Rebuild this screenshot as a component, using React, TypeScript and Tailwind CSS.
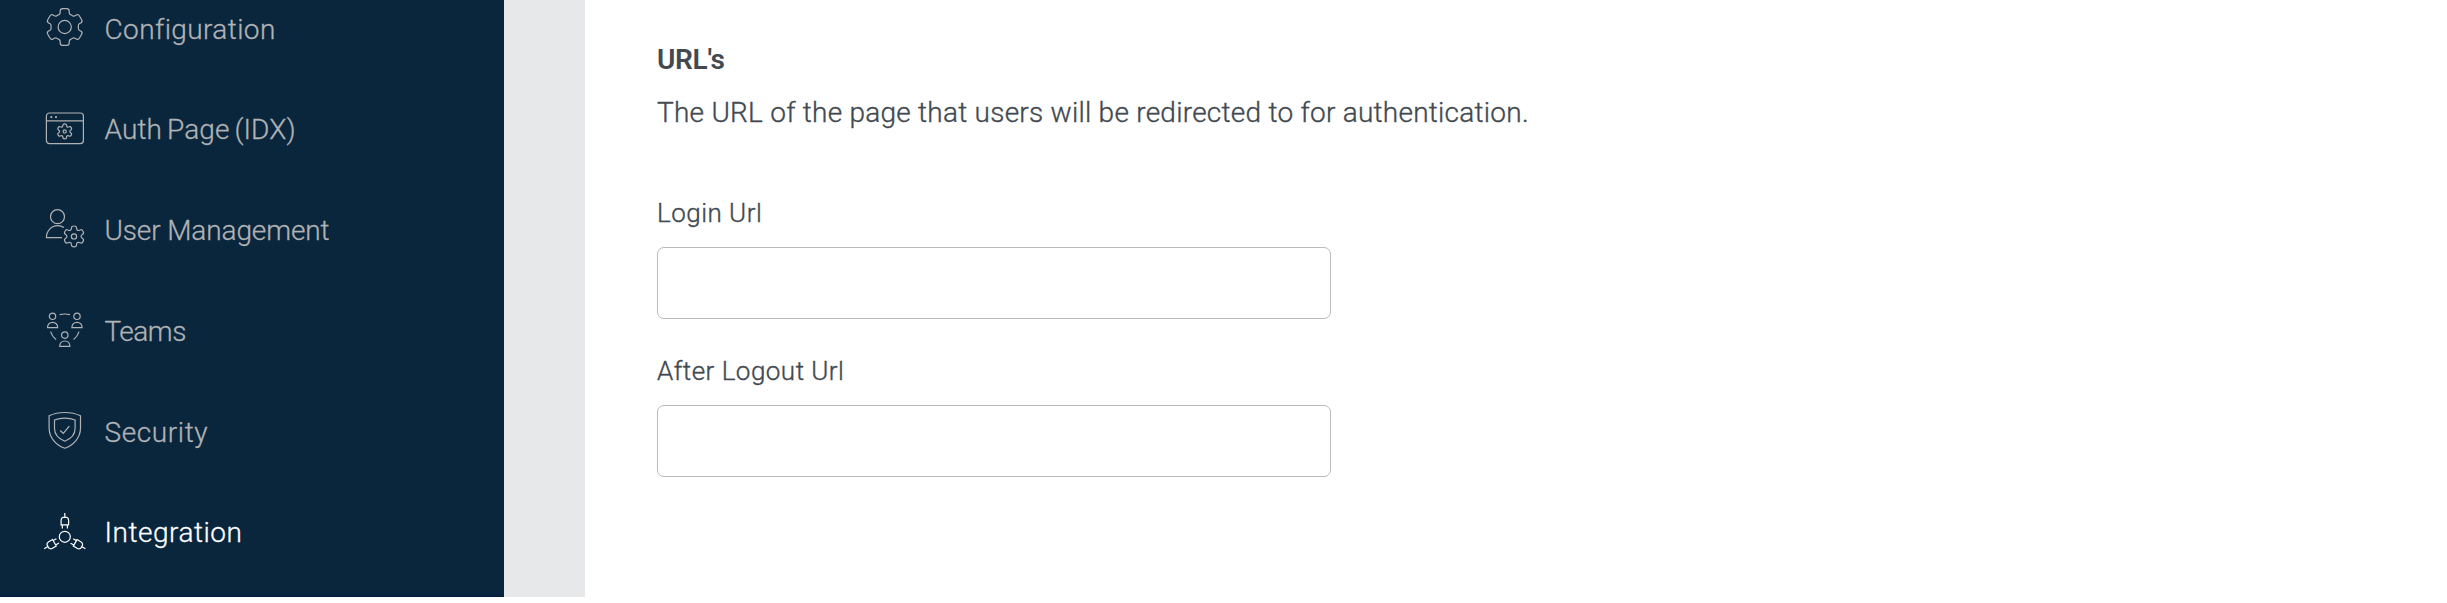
import React from "react";

function polar(cx: number, cy: number, k: number, t: number, u: number) {
  const a = (k * Math.PI) / 3;
  const x = cx + t * Math.cos(a) + u * Math.sin(a);
  const y = cy + t * Math.sin(a) - u * Math.cos(a);
  return `${x.toFixed(2)} ${y.toFixed(2)}`;
}

function bigGear(cx: number, cy: number) {
  let d = "";
  for (let k = 0; k < 6; k++) {
    const p = (t: number, u: number) => polar(cx, cy, k, t, u);
    d += `${k ? "L" : "M"}${p(-5.8, 12.4)}Q${p(-4.5, 13)} ${p(-4.5, 14.6)}L${p(-4.5, 16)}Q${p(-4.5, 18.3)} ${p(-2.2, 18.3)}`;
    d += `L${p(2.2, 18.3)}Q${p(4.5, 18.3)} ${p(4.5, 16)}L${p(4.5, 14.6)}Q${p(4.5, 13)} ${p(5.8, 12.4)}`;
  }
  return d + "Z";
}

function starGear(cx: number, cy: number, r: number) {
  const h = r * 0.24;
  let d = `M${polar(cx, cy, 0, -h, r * 0.82)}`;
  for (let k = 0; k < 6; k++) {
    d += `Q${polar(cx, cy, k, -h, r)} ${polar(cx, cy, k, 0, r)}Q${polar(cx, cy, k, h, r)} ${polar(cx, cy, k, h, r * 0.82)}`;
    d += `Q${polar(cx, cy, k + 0.5, 0, r * 0.52)} ${polar(cx, cy, k + 1, -h, r * 0.82)}`;
  }
  return d + "Z";
}

const PLUG = "M22.8 4V8.3M21 8.3H24.7Q26.6 9.2 26.6 11V15.8H19.1V11Q19.1 9.2 21 8.3ZM20.3 15.8V19.6M25.4 15.8V19.6";

const icons: Record<string, React.ReactNode> = {
  config: (
    <>
      <path d={bigGear(22.7, 22)} />
      <circle cx="22.7" cy="22" r="6.6" />
    </>
  ),
  auth: (
    <>
      <rect x="4.4" y="7" width="37" height="30.6" rx="3" />
      <path d="M4.4 14.8H41.4" />
      <circle cx="9.3" cy="11.1" r="0.5" />
      <circle cx="14" cy="11.1" r="0.5" />
      <path d={starGear(22.7, 25.4, 7.5)} />
      <circle cx="22.7" cy="25.4" r="1.6" />
    </>
  ),
  users: (
    <>
      <circle cx="15.5" cy="9.7" r="7" />
      <path d="M20 30.6H4.4C4.4 24 9.5 18.7 15.6 18.7C18 18.7 20 19.2 22 20.4" />
      <path d={starGear(32, 29.4, 10.4)} />
      <circle cx="32" cy="29.4" r="2.6" />
    </>
  ),
  teams: (
    <>
      <circle cx="10.5" cy="9.3" r="3.2" />
      <circle cx="35" cy="9.3" r="3.2" />
      <circle cx="22.8" cy="28.1" r="3.2" />
      <path d="M5.5 20.7C5.5 17.4 7.7 15.3 10.6 15.3S15.7 17.4 15.7 20.7ZM29.9 20.7C29.9 17.4 32.1 15.3 35 15.3S40.1 17.4 40.1 20.7ZM17.7 39.4C17.7 36.1 19.9 34 22.8 34S27.9 36.1 27.9 39.4Z" />
      <path d="M17.6 7.6Q22.8 6.4 28 7.6M8.6 24.6Q10 29.4 14 32.4M37 24.6Q35.6 29.4 31.6 32.4" />
    </>
  ),
  security: (
    <>
      <path d="M22.8 4.5C28 4.5 33.5 5.4 38.5 7.8V20C38.5 30 31 37.3 22.8 40.2C14.6 37.3 7.1 30 7.1 20V7.8C12.1 5.4 17.6 4.5 22.8 4.5Z" />
      <path d="M22.8 10.1C26.5 10.1 30 10.7 33.1 12V20.3C33.1 26.5 28.5 31 22.8 33.2C17.1 31 12.5 26.5 12.5 20.3V12C15.6 10.7 19.1 10.1 22.8 10.1Z" />
      <path d="M18.2 22.5L21.3 25.4L27.3 18.2" />
    </>
  ),
  integration: (
    <>
      <circle cx="22.8" cy="27.8" r="5.5" />
      <path d={PLUG} />
      <path d={PLUG} transform="rotate(120 22.8 27.8)" />
      <path d={PLUG} transform="rotate(240 22.8 27.8)" />
    </>
  ),
};

const items = [
  { icon: "config", label: "Configuration", color: "text-[#b0b2b4]", track: "tracking-[0.4px]" },
  { icon: "auth", label: "Auth Page (IDX)", color: "text-[#b0b2b4]", track: "tracking-[0.1px] [word-spacing:-2px]" },
  { icon: "users", label: "User Management", color: "text-[#b0b2b4]", track: "tracking-[-0.12px]" },
  { icon: "teams", label: "Teams", color: "text-[#b0b2b4]", track: "tracking-[-0.5px]" },
  { icon: "security", label: "Security", color: "text-[#b0b2b4]", track: "tracking-[0.6px]" },
  { icon: "integration", label: "Integration", color: "text-white", track: "tracking-[0.52px]" },
];

function Field({ label, className }: { label: string; className: string }) {
  return (
    <div className={`flex flex-col ${className}`}>
      <label className="h-[54px] text-[26px] font-light leading-[40px] tracking-[0.48px] [-webkit-text-stroke:0.35px_#42494f]">{label}</label>
      <input className="h-[72px] w-[674px] rounded-[7px] border border-[#b9bbbc] bg-white px-4" />
    </div>
  );
}

export default function App() {
  return (
    <div className="flex h-[603px] w-[2447px] overflow-hidden bg-white pb-[6px] font-[Roboto,sans-serif]">
      <nav className="h-[597px] w-[504px] shrink-0 overflow-hidden border-b-2 border-[#03203e] bg-[#0a263d]">
        <ul className="-mt-[22.4px]">
          {items.map((i) => (
            <li key={i.label} className={`flex h-[100.8px] items-center pl-[42px] text-[28px] font-light ${i.color}`}>
              <svg viewBox="0 0 46 46" className="mr-[16.5px] size-[46px] shrink-0 overflow-visible" fill="none" stroke="currentColor" strokeWidth="1.2">
                {icons[i.icon]}
              </svg>
              <span className={`pt-[3px] leading-[42px] [-webkit-text-stroke:0.3px_currentColor] ${i.track}`}>{i.label}</span>
            </li>
          ))}
        </ul>
      </nav>
      <div className="h-[597px] w-[81px] shrink-0 bg-[#e7e8ea]" />
      <main className="flex flex-col pl-[72px] pt-[39px] text-[28px] text-[#42494f]">
        <h2 className="h-[53px] font-semibold leading-[42px] tracking-[-0.3px]">URL's</h2>
        <p className="h-[101px] whitespace-nowrap font-light leading-[42px] tracking-[0.25px] [-webkit-text-stroke:0.35px_#42494f]">
          The URL of the page that users will be redirected to for authentication.
        </p>
        <Field label="Login Url" className="" />
        <Field label="After Logout Url" className="mt-[32px]" />
      </main>
    </div>
  );
}
